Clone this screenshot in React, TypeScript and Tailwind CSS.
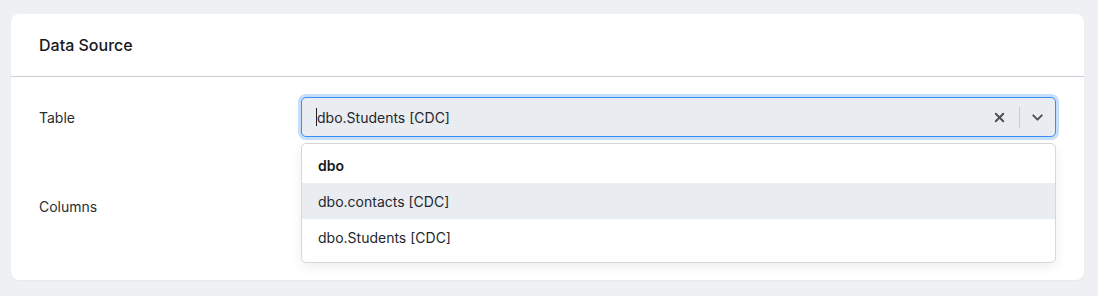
import { X, ChevronDown } from "lucide-react";

export default function App() {
  return (
    <div
      className="min-h-[296px] w-full bg-[#eff0f4] pt-[14px] pb-4 pl-[11px] pr-[14px] text-[14px] text-[#1d2026]"
      style={{ fontFamily: "Inter, 'Liberation Sans', sans-serif" }}
    >
      <div className="rounded-lg bg-white shadow-[0_1px_2px_rgba(0,0,0,0.04)] h-[266px]">
        {/* header */}
        <div className="flex h-[63px] items-center border-b border-[#c9ced6] px-7">
          <h2 className="text-[16px] font-medium text-[#16181d]">Data Source</h2>
        </div>

        {/* body */}
        <div className="px-7 pt-5">
          <div className="flex items-center">
            <label className="w-[262px] shrink-0 text-[#2a2d33]">Table</label>
            <div className="relative flex-1">
              <div className="flex h-10 items-center rounded-[5px] border border-[#3a8ef2] bg-[#e9ecf0] pl-[14px] ring-[3px] ring-[#c4defb]">
                <span className="h-[18px] w-px bg-[#1d2026]" />
                <span className="flex-1 text-[#24272d]">dbo.Students [CDC]</span>
                <button className="flex h-full w-[40px] items-center justify-center text-[#4b5058]">
                  <X size={15} strokeWidth={3} />
                </button>
                <span className="h-[21px] w-px bg-[#c8cbd0]" />
                <button className="flex h-full w-[35px] items-center justify-center text-[#4b5058]">
                  <ChevronDown size={17} strokeWidth={2.75} />
                </button>
              </div>

              {/* menu */}
              <div className="absolute left-0 right-0 top-[46px] z-10 rounded-[5px] border border-[#d6d7d9] bg-white pt-1 pb-[7px] shadow-[0_4px_12px_rgba(0,0,0,0.07)]">
                <div className="flex h-[35px] items-center px-4 font-semibold text-[#16181d]">dbo</div>
                <div className="flex h-9 items-center bg-[#e9ecf0] px-4 text-[#24272d]">dbo.contacts [CDC]</div>
                <div className="flex h-9 items-center px-4 text-[#24272d]">dbo.Students [CDC]</div>
              </div>
            </div>
          </div>

          <div className="mt-[59px] flex items-center">
            <label className="w-[262px] shrink-0 text-[#2a2d33]">Columns</label>
          </div>
        </div>
      </div>
    </div>
  );
}
